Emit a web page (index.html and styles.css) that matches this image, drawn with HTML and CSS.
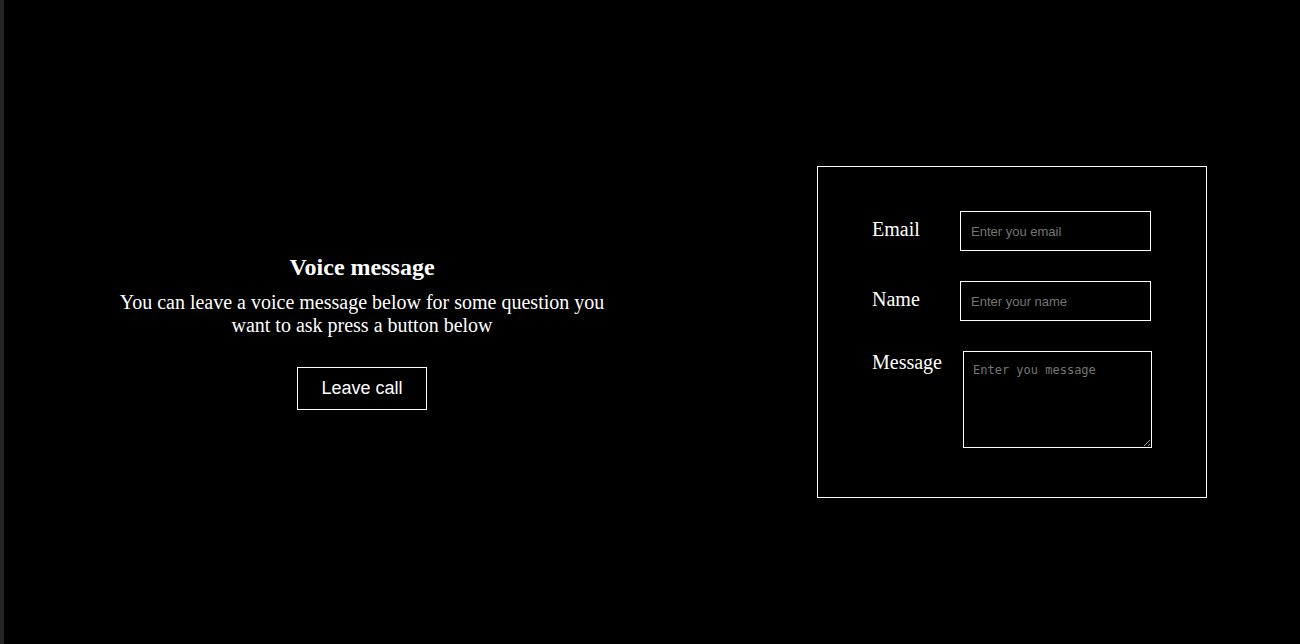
FILE: index.html
```html
<!DOCTYPE html>
<html lang="en">

<head>
    <meta charset="UTF-8">
    <meta name="viewport" content="width=device-width, initial-scale=1.0">
    <title>Contact</title>
    <link rel="stylesheet" href="styles.css">
</head>

<body>
    <main class="contact-page">
        <section class="voice-box">
            <h2>Voice message</h2>
            <p>You can leave a voice message below for some question you want to ask press a button below</p>
            <button class="call-btn">Leave call</button>
        </section>

        <form class="contact-form">
            <div class="form-row">
                <label for="email">Email</label>
                <input type="email" id="email" placeholder="Enter you email">
            </div>
            <div class="form-row">
                <label for="name">Name</label>
                <input type="text" id="name" placeholder="Enter your name">
            </div>
            <div class="form-row top">
                <label for="message">Message</label>
                <textarea id="message" placeholder="Enter you message"></textarea>
            </div>
        </form>
    </main>
</body>

</html>
```

FILE: styles.css
```css
body {
    margin: 0;
    background-color: #000;
    color: white;
    font-family: "Liberation Serif", "Times New Roman", serif;
    border-left: 4px solid #242424;
    box-sizing: border-box;
    height: 644px;
    overflow: hidden;
}

.contact-page {
    display: flex;
    align-items: center;
    gap: 205px;
    height: 644px;
    padding: 20px 0 0 108px;
    box-sizing: border-box;
}

.voice-box {
    width: 500px;
    text-align: center;
}

.voice-box h2 {
    font-size: 24px;
    margin: 0 0 10px;
}

.voice-box p {
    font-size: 20px;
    margin: 0 0 30px;
}

.call-btn {
    background-color: #000;
    color: white;
    border: 1px solid white;
    font-family: "Liberation Sans", Arial, sans-serif;
    font-size: 18px;
    padding: 10px 23px;
    height: 43px;
    width: 130px;
    cursor: pointer;
}

.contact-form {
    width: 390px;
    height: 332px;
    box-sizing: border-box;
    border: 1px solid white;
    padding: 44px 0 0 54px;
}

.form-row {
    display: flex;
    align-items: center;
    margin-bottom: 30px;
}

.form-row.top {
    align-items: flex-start;
}

.form-row label {
    font-size: 20px;
    min-width: 68px;
    margin-right: 20px;
    padding-bottom: 4px;
}

.form-row.top label {
    padding-bottom: 0;
    margin-right: 21px;
}

.form-row input {
    width: 191px;
    height: 40px;
    box-sizing: border-box;
    padding: 0 10px;
    background-color: #000;
    color: white;
    border: 1px solid white;
    font-family: "Liberation Sans", Arial, sans-serif;
    font-size: 13px;
}

.form-row textarea {
    width: 189px;
    height: 97px;
    box-sizing: border-box;
    padding: 11px 9px;
    background-color: #000;
    color: white;
    border: 1px solid white;
    font-family: "DejaVu Sans Mono", monospace;
    font-size: 12px;
}

::placeholder {
    color: #757575;
}
```
